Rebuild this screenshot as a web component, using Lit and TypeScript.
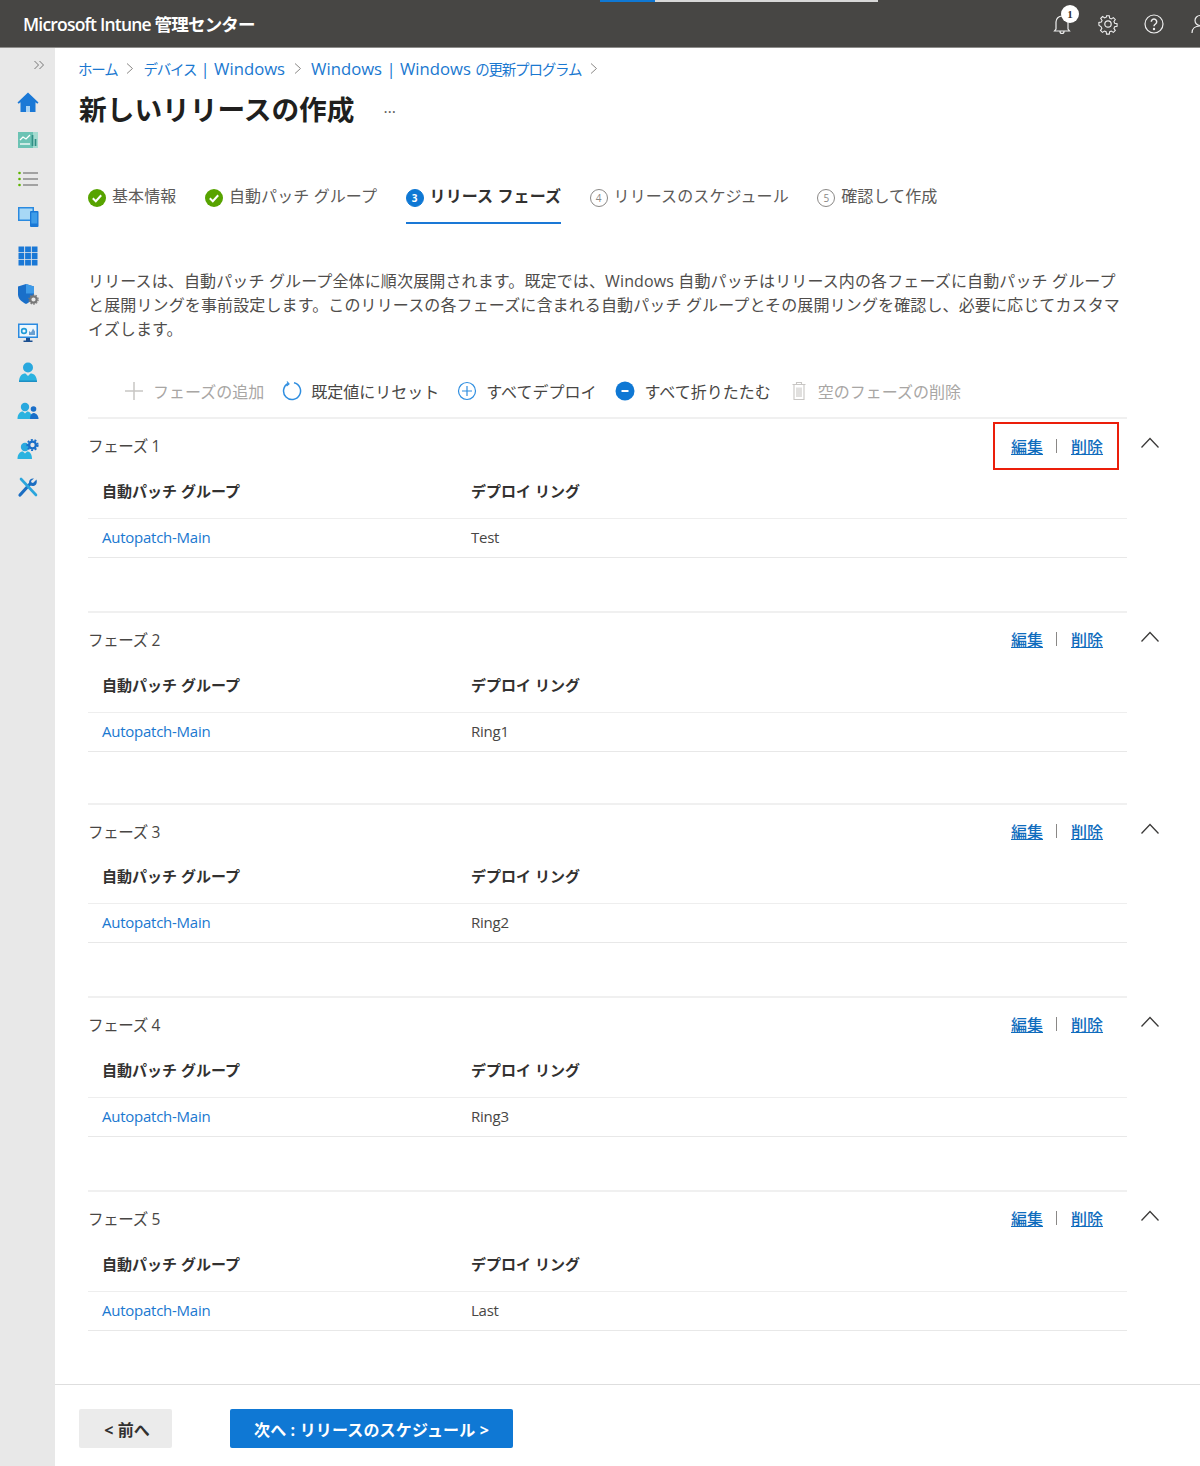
import { LitElement, html, css, svg } from "lit";
import { customElement } from "lit/decorators.js";

const navIcons = [
  svg`<path d="M11 1.500 .500 11.500l1.200 1.300L3.500 11.200V21h5.500v-6h4v6h5.500v-9.800l1.800 1.600 1.200-1.300z" fill="#1a78d6"/><rect x="9" y="15" width="4" height="6" fill="#a9d3f5"/>`,
  svg`<rect x="1" y="3" width="15" height="16" fill="#6cc3b4"/><rect x="16" y="3" width="5" height="16" fill="#a5dbd0"/><path d="M3 11l3-3 3 2 4-4" fill="none" stroke="#fff" stroke-width="1.300"/><path d="M3 15h10" stroke="#fff" stroke-width="1.300"/><path d="M15.500 6v11M18.500 10v7" stroke="#2f8f85" stroke-width="1.700"/>`,
  svg`<path d="M6 5h15M6 11h15M6 17h15" stroke="#8a8a8a" stroke-width="1.300"/><circle cx="2.500" cy="5" r="1.300" fill="#5db300"/><circle cx="2.500" cy="11" r="1.300" fill="#5db300"/><circle cx="2.500" cy="17" r="1.300" fill="#5db300"/>`,
  svg`<rect x="1" y="1" width="16" height="14" fill="#2a8ae0"/><rect x="2.500" y="2.500" width="13" height="11" fill="#a8d8f6"/><rect x="13" y="5" width="8.500" height="16" rx="1" fill="#1a78d6"/><rect x="14.300" y="6.500" width="5.900" height="11" fill="#3e9ce8"/>`,
  svg`<path d="M1.500 1.500h5.700v5.700H1.500zM8.100 1.500h5.800v5.700H8.100zM14.800 1.500h5.700v5.700h-5.700zM1.500 8.100h5.700v5.800H1.500zM8.100 8.100h5.800v5.800H8.100zM14.800 8.100h5.700v5.800h-5.700zM1.500 14.800h5.700v5.700H1.500zM8.100 14.800h5.800v5.700H8.100zM14.800 14.800h5.700v5.700h-5.700z" fill="#1a78d6"/>`,
  svg`<path d="M1 3.500 9 1l8 2.500v8c0 4.500-4 7.500-8 9.500-4-2-8-5-8-9.500z" fill="#1a6fc9"/><path d="M9 1l8 2.500v7H9z" fill="#3d9ae8"/><circle cx="16.500" cy="16.500" r="3.200" fill="#e8e8e8" stroke="#777" stroke-width="2.200"/><circle cx="16.500" cy="16.500" r="4.600" fill="none" stroke="#777" stroke-width="1.200" stroke-dasharray="1.500 1.400"/>`,
  svg`<rect x="1" y="1.500" width="20" height="14.500" fill="#2a8ae0"/><rect x="2.500" y="3" width="17" height="11.500" fill="#eef7fd"/><circle cx="7" cy="9" r="2.400" fill="none" stroke="#1f9bd8" stroke-width="1.600"/><path d="M12 13V9l2 1.500 2-4 2 3v3.500z" fill="#6a9fd0"/><path d="M9 16h4v2.500h2.500V20h-9v-1.500H9z" fill="#1b4f91"/>`,
  svg`<circle cx="11" cy="6.500" r="5" fill="#29a8de"/><path d="M2 21c0-6 3-8.500 6.500-8.500L11 15l2.500-2.500c3.500 0 6.500 2.500 6.500 8.500z" fill="#2bb3e0"/><path d="M2 21h18v-1.500H2z" fill="#1d8fc4"/>`,
  svg`<circle cx="8" cy="8" r="4.200" fill="#29a8de"/><path d="M.500 20c0-5 2.500-7.500 5.500-7.500l2 2 2-2c3 0 5 2.500 5 7.500z" fill="#2bb3e0"/><circle cx="16.500" cy="10" r="2.800" fill="#1a6fc9"/><path d="M13 20c0-4 1.500-6 3.500-6s5 2 5 6z" fill="#1a6fc9"/>`,
  svg`<circle cx="8" cy="9" r="4.200" fill="#29a8de"/><path d="M.500 21c0-5 2.500-7.500 5.500-7.500l2 2 2-2c3 0 5 2.500 5 7.500z" fill="#2bb3e0"/><circle cx="15.500" cy="7" r="3.400" fill="none" stroke="#1a6fc9" stroke-width="2.400"/><circle cx="15.500" cy="7" r="5.200" fill="none" stroke="#1a6fc9" stroke-width="1.800" stroke-dasharray="2 1.700"/>`,
  svg`<path d="M3 19 13 8" stroke="#1b6ec2" stroke-width="3.200" stroke-linecap="round"/><path d="M4 3l15 16" stroke="#2aa5dc" stroke-width="2.600" stroke-linecap="round"/><path d="M19.500 2.500 16 6l-1.500-.5L14 4l3-2.500c-2.500-.5-5 1-5 4 0 2 2 4 4.500 3.500 2.500-.5 4-3 3-6.500z" fill="#1b6ec2" transform="translate(0 1)"/>`,
];

const check = html`<svg class="stepicon" viewBox="0 0 18 18"><circle cx="9" cy="9" r="9" fill="#57a300"/><path d="M4.800 9.300 7.800 12.200 13.200 6.300" fill="none" stroke="#fff" stroke-width="2"/></svg>`;
const numbered = (n: string, active: boolean) => active
  ? html`<span class="num on">${n}</span>`
  : html`<span class="num">${n}</span>`;

const phases = [
  { n: 1, ring: "Test", gap: 53, head: 101 },
  { n: 2, ring: "Ring1", gap: 51, head: 101 },
  { n: 3, ring: "Ring2", gap: 53, head: 100 },
  { n: 4, ring: "Ring3", gap: 53, head: 101 },
  { n: 5, ring: "Last", gap: 53, head: 101 },
];

@customElement("app-root")
export class AppRoot extends LitElement {
  static styles = css`
    :host { display: block; width: 1200px; height: 1466px; overflow: hidden; background: #fff; color: #323130;
      font-family: "Open Sans", "Noto Sans CJK JP", sans-serif; font-size: 15.5px; }
    * { box-sizing: border-box; }
    .top { height: 48px; background: #474644; position: relative; display: flex; align-items: center; padding-left: 23px; color: #fff; overflow: hidden; border-bottom: 1px solid #8e8d8b; }
    .brand { font-size: 17.5px; font-weight: 600; letter-spacing: -0.8px; white-space: nowrap; }
    .progress { position: absolute; left: 600px; top: 0; height: 2px; width: 278px; background: #d8d8d8; }
    .progress i { display: block; height: 2px; width: 55px; background: #0f78d4; }
    .tools { margin-left: auto; display: flex; align-items: center; position: relative; }
    .tools svg { display: block; fill: none; stroke: #eee; stroke-width: 1.2; }
    .bellbox { width: 24px; height: 24px; position: relative; margin-right: 22px; left: -1px; }
    .badge { position: absolute; left: 11px; top: -7px; width: 18px; height: 18px; border-radius: 50%; background: #fff; color: #323130; font: 700 11px/18px "Liberation Serif", serif; text-align: center; }
    .gear { margin-right: 24px; }
    .help { margin-right: 24px; }
    .userbox { width: 11px; overflow: hidden; }
    .body { display: flex; height: 1418px; }
    .side { width: 55px; flex: none; background: #e8e8e8; display: flex; flex-direction: column; align-items: center; }
    .collapse { align-self: flex-end; margin: 11px 10px 19.500px 0; width: 12px; height: 12px; }
    .collapse svg { display: block; }
    .navs { display: flex; flex-direction: column; gap: 16.600px; }
    .navs svg { display: block; width: 22px; height: 22px; }
    .main { flex: 1; min-width: 0; display: flex; flex-direction: column; }
    .scroll { flex: 1; padding: 9px 40px 0 23px; }
    .crumbs { height: 22px; display: flex; align-items: center; color: #1a78d0; font-size: 16.700px; gap: 9px; white-space: nowrap; }
    .crumbs svg { width: 8px; height: 11px; fill: none; stroke: #8a8886; stroke-width: 1; }
    .crumbs .k { font-size: 14.500px; letter-spacing: -1.200px; }
    .titlerow { display: flex; align-items: center; height: 40px; margin-top: 10px; padding-left: 1px; }
    h1 { margin: 0; font-size: 27.700px; font-weight: 700; color: #201f1e; line-height: 40px; white-space: nowrap; }
    .dots { margin-left: 29px; color: #605e5c; font-size: 16px; position: relative; top: -2px; }
    .content { padding-left: 10px; }
    .steps { display: flex; margin-top: 53px; height: 42px; white-space: nowrap; }
    .step { display: flex; align-items: flex-start; gap: 6px; font-size: 16px; letter-spacing: 0.1px; color: #5c5a58; height: 42px; padding-top: 2px; line-height: 24px; }
    .step.active { color: #323130; font-weight: 700; border-bottom: 2px solid #1a78d6; }
    .step + .step { margin-left: 28.500px; }
    .stepicon { width: 18px; height: 18px; margin-top: 5px; flex: none; }
    .num { width: 18px; height: 18px; margin-top: 5px; border-radius: 50%; border: 1px solid #8a8886; color: #8a8886; font-size: 10px; line-height: 16px; text-align: center; flex: none; font-weight: 400; letter-spacing: 0; }
    .num.on { background: #0f78d4; border-color: #0f78d4; color: #fff; font-weight: 700; }
    .desc { margin: 45px 0 0; width: 1039px; font-size: 16px; line-height: 24px; color: #4f4d4b; letter-spacing: 0.13px; }
    .bar { display: flex; align-items: center; height: 28px; margin-top: 36px; padding-left: 36px; font-size: 16px; white-space: nowrap; color: #484644; }
    .cmd { display: flex; align-items: center; gap: 9px; }
    .cmd svg { width: 20px; height: 20px; flex: none; fill: none; }
    .cmd.off { color: #a8a6a4; }
    .m18 { margin-left: 18px; }
    .m19 { margin-left: 19px; }
    .phases { margin-top: 12px; }
    .phase { width: 1072px; }
    .head { display: grid; grid-template-columns: 1039px 33px; }
    .headmain { border-top: 2px solid #f0f0f0; display: flex; align-items: flex-start; justify-content: space-between; }
    .label { margin-top: 15px; line-height: 24px; font-size: 15.500px; letter-spacing: -0.35px; color: #484644; }
    .links { margin: 2px 8px 0 0; width: 126px; height: 48px; display: flex; align-items: center; padding-left: 16px; border: 2px solid transparent; }
    .links.hl { border-color: #eb1e0a; margin-top: 3px; }
    .links a { color: #0f6cbd; font-size: 16px; font-weight: 500; text-decoration: underline; }
    .links i { width: 1px; height: 14px; background: #8a8886; margin: 0 14.500px 0 12.500px; }
    .chev { margin: 18px 0 0 13px; width: 20px; height: 14px; fill: none; stroke: #3b3a39; stroke-width: 1.300; }
    .thead, .row { width: 1039px; display: grid; grid-template-columns: 369px 1fr; padding-left: 14px; align-items: center; }
    .thead { font-weight: 700; color: #323130; font-size: 15px; line-height: 24px; border-bottom: 1px solid #eee; padding-bottom: 15px; align-items: end; height: 45px; }
    .row { height: 39px; padding-bottom: 2px; border-bottom: 1px solid #e8e8e8; font-size: 15px; letter-spacing: -0.25px; color: #484644; }
    .row a { color: #1a78d0; }
    .foot { height: 82px; border-top: 1px solid #dedede; padding: 24px 0 0 24px; display: flex; gap: 58px; align-items: flex-start; }
    .btn { height: 39px; border-radius: 2px; display: flex; align-items: center; justify-content: center; font-size: 16px; font-weight: 700; white-space: nowrap; }
    .prev { width: 93px; background: #ebebeb; color: #323130; padding-left: 3px; }
    .next { width: 283px; background: #0f78d4; color: #fff; letter-spacing: 0.15px; }
  `;

  render() {
    return html`
      <div class="top">
        <div class="brand">Microsoft Intune 管理センター</div>
        <div class="progress"><i></i></div>
        <div class="tools">
          <div class="bellbox">
            <svg width="24" height="24" viewBox="0 0 24 24"><path d="M6 17V10a6 6 0 0 1 12 0v7l1.500 2h-15zM10 19.500a2 2 0 0 0 4 0"/></svg>
            <span class="badge">1</span>
          </div>
          <svg class="gear" width="22" height="22" viewBox="0 0 22 22"><circle cx="11" cy="11" r="3.200"/><path d="M9.500 2h3l.5 2.700 1.800.8 2.300-1.500 2.100 2.100-1.500 2.300.8 1.800 2.700.5v3l-2.700.5-.8 1.800 1.500 2.300-2.100 2.100-2.300-1.500-1.800.8-.5 2.700h-3l-.5-2.700-1.800-.8-2.300 1.500-2.100-2.100 1.500-2.300-.8-1.800L1 12.500v-3l2.700-.5.8-1.800L3 4.900 5.100 2.800l2.300 1.500 1.800-.8z" transform="translate(1 1) scale(.9)"/></svg>
          <svg class="help" width="22" height="22" viewBox="0 0 22 22"><circle cx="11" cy="11" r="9"/><path d="M8.300 8.700a2.700 2.700 0 1 1 4.200 2.300c-1 .7-1.500 1.200-1.500 2.300" stroke-width="1.500"/><circle cx="11" cy="16" r=".6" fill="#eee"/></svg>
          <div class="userbox"><svg width="22" height="22" viewBox="0 0 22 22"><circle cx="11" cy="7.500" r="5"/><path d="M3 20c0-4.500 3.500-7 8-7s8 2.500 8 7"/></svg></div>
        </div>
      </div>
      <div class="body">
        <nav class="side">
          <div class="collapse"><svg width="12" height="12" viewBox="0 0 12 12" fill="none" stroke="#777" stroke-width="1"><path d="M1.500 2 5.500 6 1.500 10M6.500 2 10.500 6 6.500 10"/></svg></div>
          <div class="navs">${navIcons.map((i) => html`<svg viewBox="0 0 22 22">${i}</svg>`)}</div>
        </nav>
        <div class="main">
          <div class="scroll">
            <div class="crumbs">
              <span class="k">ホーム</span>${this.sep()}
              <span><span class="k">デバイス</span> | Windows</span>${this.sep()}
              <span>Windows | Windows <span class="k">の更新プログラム</span></span>${this.sep()}
            </div>
            <div class="titlerow"><h1>新しいリリースの作成</h1><span class="dots">…</span></div>
            <div class="content">
              <div class="steps">
                <div class="step">${check}基本情報</div>
                <div class="step">${check}自動パッチ グループ</div>
                <div class="step active">${numbered("3", true)}リリース フェーズ</div>
                <div class="step">${numbered("4", false)}リリースのスケジュール</div>
                <div class="step">${numbered("5", false)}確認して作成</div>
              </div>
              <p class="desc">リリースは、自動パッチ グループ全体に順次展開されます。既定では、Windows 自動パッチはリリース内の各フェーズに自動パッチ グループと展開リングを事前設定します。このリリースの各フェーズに含まれる自動パッチ グループとその展開リングを確認し、必要に応じてカスタマイズします。</p>
              <div class="bar">
                <div class="cmd off"><svg viewBox="0 0 20 20" stroke="#c8c6c4" stroke-width="1.500"><path d="M10 1v18M1 10h18"/></svg>フェーズの追加</div>
                <div class="cmd m18"><svg viewBox="0 0 20 20" stroke="#2f8ee0" stroke-width="1.500"><path d="M6 2.500A8.500 8.500 0 1 0 12 1.700"/><path d="M5 .5 7 3 4.500 5" stroke-width="1.200"/></svg>既定値にリセット</div>
                <div class="cmd m18"><svg viewBox="0 0 20 20" stroke="#2f8ee0" stroke-width="1.200"><circle cx="10" cy="10" r="8.500"/><path d="M10 5v10M5 10h10"/></svg>すべてデプロイ</div>
                <div class="cmd m19"><svg viewBox="0 0 20 20"><circle cx="10" cy="10" r="9.500" fill="#0f78d4"/><path d="M6.500 10h7" stroke="#fff" stroke-width="2"/></svg>すべて折りたたむ</div>
                <div class="cmd off m18"><svg viewBox="0 0 20 20" stroke="#c8c6c4" stroke-width="1.100"><path d="M3.500 3.500h13M7.500 3.500V1.500h5v2M5 3.500V18.500h10V3.500M8 6.500v9.500M10 6.500v9.500M12 6.500v9.500"/></svg>空のフェーズの削除</div>
              </div>
              <div class="phases">
                ${phases.map((p) => html`
                  <section class="phase" style="margin-bottom:${p.gap}px">
                    <div class="head" style="height:${p.head - 44}px">
                      <div class="headmain">
                        <span class="label">フェーズ ${p.n}</span>
                        <div class="links ${p.n === 1 ? "hl" : ""}"><a>編集</a><i></i><a>削除</a></div>
                      </div>
                      <svg class="chev" viewBox="0 0 20 14"><path d="M1.500 12.500 10 3.500 18.500 12.500"/></svg>
                    </div>
                    <div class="thead"><span>自動パッチ グループ</span><span>デプロイ リング</span></div>
                    <div class="row"><a>Autopatch-Main</a><span>${p.ring}</span></div>
                  </section>`)}
              </div>
            </div>
          </div>
          <div class="foot">
            <div class="btn prev">&lt; 前へ</div>
            <div class="btn next">次へ : リリースのスケジュール &gt;</div>
          </div>
        </div>
      </div>
    `;
  }

  sep() {
    return html`<svg viewBox="0 0 8 11"><path d="M1 .5 6.500 5.500 1 10.500"/></svg>`;
  }
}
